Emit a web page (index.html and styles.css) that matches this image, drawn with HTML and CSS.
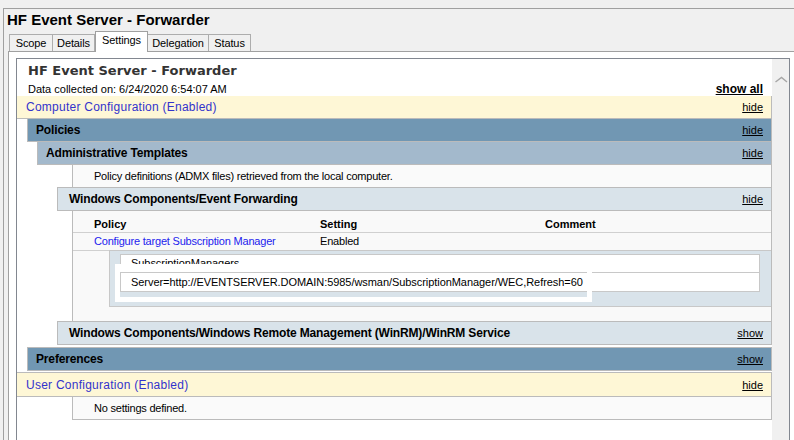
FILE: index.html
```html
<!DOCTYPE html>
<html>
<head>
<meta charset="utf-8">
<link rel="stylesheet" href="styles.css">
</head>
<body>
<div class="topstrip"></div>
<div class="window">
  <div class="wtitle">HF Event Server - Forwarder</div>
  <div class="tabs">
    <div class="tab t-scope">Scope</div>
    <div class="tab t-details">Details</div>
    <div class="tab sel t-settings">Settings</div>
    <div class="tab t-deleg">Delegation</div>
    <div class="tab t-status">Status</div>
  </div>
  <div class="panel">
    <div class="box">
      <div class="report">
        <div class="rhead">
          <div class="rtitle">HF Event Server - Forwarder</div>
          <div class="rsub"><span>Data collected on: 6/24/2020 6:54:07 AM</span><span class="showall">show all</span></div>
        </div>
        <div class="he he0"><span>Computer Configuration (Enabled)</span><span class="tog">hide</span></div>
        <div class="he he1"><span>Policies</span><span class="tog">hide</span></div>
        <div class="he he2"><span>Administrative Templates</span><span class="tog">hide</span></div>
        <div class="ct ct-text">Policy definitions (ADMX files) retrieved from the local computer.</div>
        <div class="he he3"><span>Windows Components/Event Forwarding</span><span class="tog">hide</span></div>
        <div class="ct tbl">
          <div class="trow thead"><span>Policy</span><span>Setting</span><span>Comment</span></div>
          <div class="trow r1"><span class="link">Configure target Subscription Manager</span><span>Enabled</span><span></span></div>
          <div class="sub">
            <div class="cell c1">SubscriptionManagers</div>
            <div class="cell c2">Server=http://EVENTSERVER.DOMAIN:5985/wsman/SubscriptionManager/WEC,Refresh=60</div>
            <div class="glitch"></div>
          </div>
        </div>
        <div class="he he3"><span>Windows Components/Windows Remote Management (WinRM)/WinRM Service</span><span class="tog">show</span></div>
        <div class="he he1 pref"><span>Preferences</span><span class="tog">show</span></div>
        <div class="he he0 user"><span>User Configuration (Enabled)</span><span class="tog">hide</span></div>
        <div class="ct ct-text">No settings defined.</div>
      </div>
      <div class="vscroll">
        <svg class="chev" width="17" height="17" viewBox="0 0 17 17"><polyline points="3.5,11 9.5,6.5 15,11" fill="none" stroke="#a6a6a6" stroke-width="1.4"/></svg>
      </div>
    </div>
  </div>
</div>
</body>
</html>
```
FILE: styles.css
```css
html, body {
  margin: 0;
  padding: 0;
}
body {
  width: 794px;
  height: 440px;
  overflow: hidden;
  background: #f0f0f0;
  font-family: "Liberation Sans", Arial, sans-serif;
  color: #000;
}
.topstrip {
  height: 8px;
}
.window {
  margin-left: 3px;
  border-left: 1px solid #a0a0a0;
  border-top: 1px solid #a0a0a0;
}
.wtitle {
  height: 22px;
  line-height: 22px;
  padding-left: 3px;
  font-size: 15px;
  font-weight: bold;
}
.tabs {
  display: flex;
  align-items: flex-end;
  height: 20px;
  padding-left: 5px;
}
.tab {
  box-sizing: border-box;
  height: 17px;
  line-height: 16px;
  margin-right: -1px;
  border: 1px solid #adadad;
  border-bottom: none;
  background: #f0f0f0;
  font-size: 11px;
  letter-spacing: -0.1px;
  text-align: center;
  white-space: nowrap;
}
.t-scope { width: 44px; }
.t-details { width: 43px; }
.t-settings { width: 53px; }
.t-deleg { width: 62px; }
.t-status { width: 43px; }
.tab.sel {
  position: relative;
  z-index: 1;
  height: 21px;
  line-height: 16px;
  margin-left: 1px;
  margin-bottom: -1px;
  background: #fff;
  border-color: #a0a0a0;
}
.panel {
  margin-left: 4px;
  border-left: 1px solid #a0a0a0;
  border-top: 1px solid #a0a0a0;
  background: #fff;
  height: 400px;
}
.box {
  margin: 6px 0 0 7px;
  width: 772px;
  height: 400px;
  border: 1px solid #828790;
  display: flex;
  background: #fff;
}
.report {
  width: 755px;
  flex: none;
}
.vscroll {
  width: 17px;
  flex: none;
  background: #f0f0f0;
}
.chev {
  display: block;
  margin-top: 12px;
}
.rhead {
  padding: 0 9px 0 11px;
}
.rtitle {
  font-family: "DejaVu Sans", Verdana, sans-serif;
  font-weight: bold;
  font-size: 13px;
  line-height: 24px;
  color: #333;
}
.rsub {
  display: flex;
  justify-content: space-between;
  align-items: center;
  height: 13px;
  line-height: 13px;
  font-size: 11px;
}
.showall {
  font-weight: bold;
  font-size: 12px;
  text-decoration: underline;
}
.he {
  box-sizing: border-box;
  height: 24px;
  margin-top: -1px;
  border: 1px solid #bbb;
  display: flex;
  align-items: center;
  justify-content: space-between;
  padding: 0 8px;
  font-size: 12px;
  font-weight: bold;
  letter-spacing: -0.15px;
  white-space: nowrap;
}
.tog {
  font-weight: normal;
  font-size: 11px;
  letter-spacing: 0;
  text-decoration: underline;
  color: #000;
}
.he0 {
  height: 23px;
  margin-top: 0;
  border-left: none;
  border-top: none;
  padding-left: 9px;
  background: #fef7d6;
  color: #3333cc;
  font-weight: normal;
  letter-spacing: 0.25px;
}
.he1 {
  margin-left: 10px;
  background: #7197b3;
}
.he2 {
  margin-left: 20px;
  background: #a3b9cc;
}
.he3 {
  margin-left: 40px;
  padding-left: 11px;
  background: #d9e3ea;
}
.pref {
  margin-top: 2px;
}
.user {
  margin-top: 1px;
  height: 25px;
  border-top: 1px solid #bbb;
}
.ct {
  margin-left: 55px;
  margin-top: -1px;
  border: 1px solid #bbb;
  background: #fafafa;
}
.ct-text {
  box-sizing: border-box;
  height: 24px;
  line-height: 22px;
  padding-left: 21px;
  font-size: 11px;
  letter-spacing: -0.22px;
}
.tbl {
  background: #f9f9f9;
}
.trow {
  display: grid;
  grid-template-columns: 226px 225px 1fr;
  padding-left: 21px;
  border-bottom: 1px solid #d0d0d0;
  font-size: 11px;
  white-space: nowrap;
}
.thead {
  padding-top: 5px;
  line-height: 16px;
  font-weight: bold;
}
.r1 {
  line-height: 17px;
  letter-spacing: -0.2px;
}
.link {
  color: #2222ee;
}
.sub {
  position: relative;
  margin: -1px 0 14px 36px;
  padding: 3px 11px 14px 10px;
  border: 1px solid #c8c8c8;
  border-right: none;
  background: #d9e3ea;
}
.cell {
  box-sizing: border-box;
  background: #fff;
  border: 1px solid #c8c8c8;
  padding-left: 10px;
  font-size: 11px;
  letter-spacing: -0.06px;
  white-space: nowrap;
  overflow: hidden;
}
.c1 {
  height: 18px;
  line-height: 17px;
  border-bottom: none;
}
.c2 {
  height: 20px;
  line-height: 18px;
}
.glitch {
  position: absolute;
  left: 5px;
  top: 13px;
  width: 477px;
  height: 38px;
  box-sizing: border-box;
  border: 5px solid #fff;
  border-top-width: 8px;
}
```
